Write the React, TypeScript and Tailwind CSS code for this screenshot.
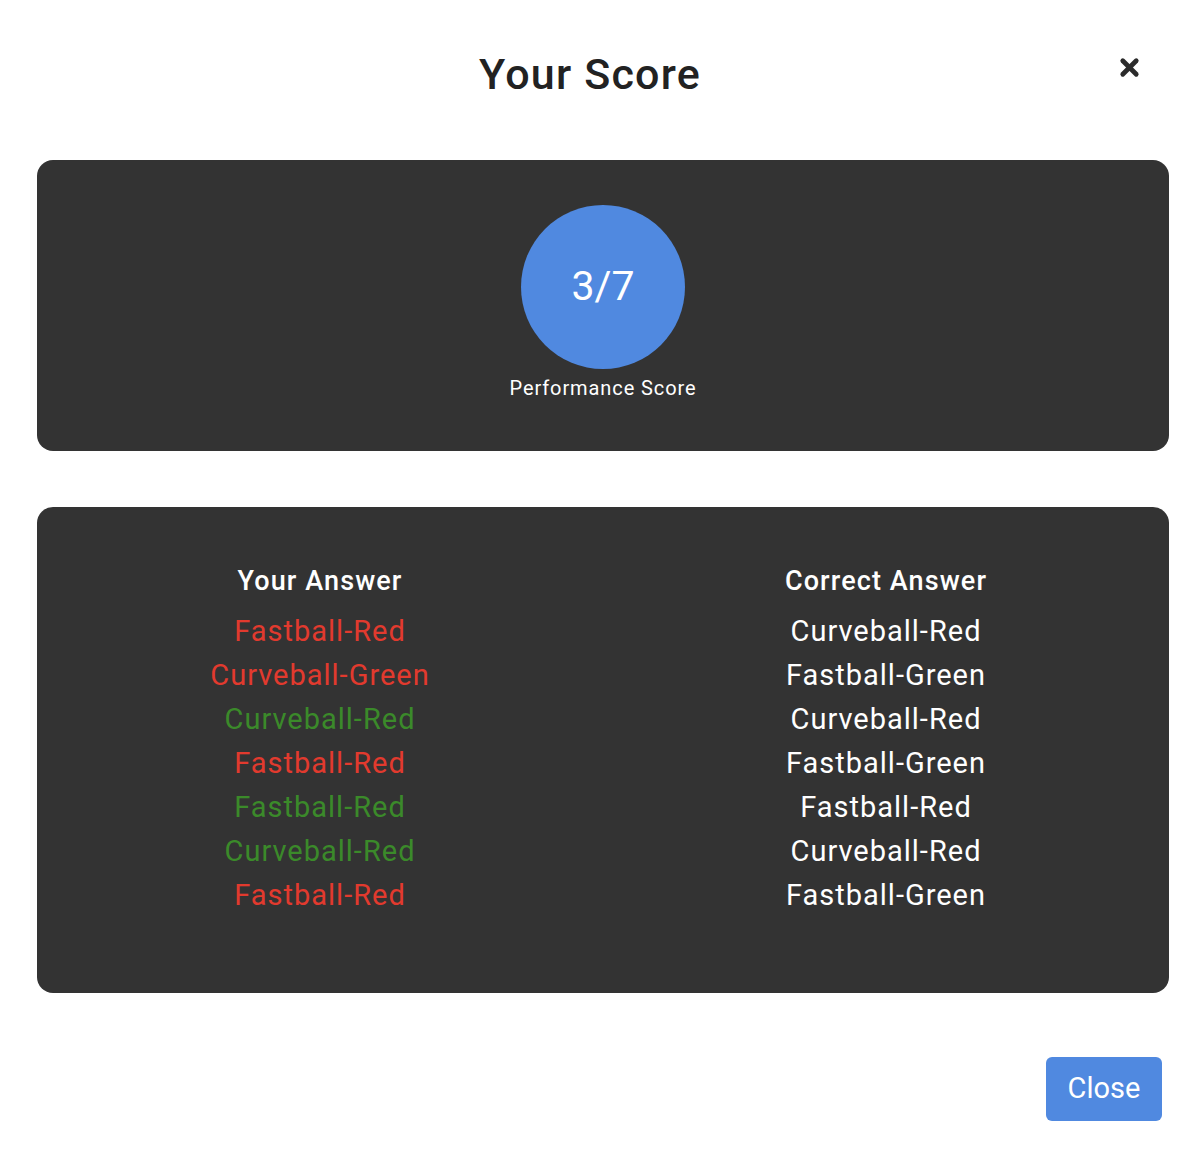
import {X} from "lucide-react";

const rows = [
    {mine: "Fastball-Red", ok: false, correct: "Curveball-Red"},
    {mine: "Curveball-Green", ok: false, correct: "Fastball-Green"},
    {mine: "Curveball-Red", ok: true, correct: "Curveball-Red"},
    {mine: "Fastball-Red", ok: false, correct: "Fastball-Green"},
    {mine: "Fastball-Red", ok: true, correct: "Fastball-Red"},
    {mine: "Curveball-Red", ok: true, correct: "Curveball-Red"},
    {mine: "Fastball-Red", ok: false, correct: "Fastball-Green"},
];

export default function App() {
    return (
        <div className="min-h-[1173px] w-[1200px] bg-white font-['Roboto','Liberation_Sans',sans-serif]">
            <div className="relative h-[160px]">
                <h2 className="flex justify-center pt-[48px] pr-[20px] text-[43px] leading-[52px] font-medium tracking-[1.2px] text-[#222222]">
                    Your Score
                </h2>
                <button className="absolute left-[1116px] top-[54px] text-[#2b2b2b]">
                    <X size={27} strokeWidth={4.2}/>
                </button>
            </div>

            <div className="ml-[37px] flex h-[291px] w-[1132px] flex-col items-center rounded-[16px] bg-[#333333] pt-[45px]">
                <div className="flex h-[164px] w-[164px] items-center justify-center rounded-full bg-[#5089e0] text-[41px] text-white">
                    3/7
                </div>
                <p className="mt-[7px] text-[20px] leading-[24px] tracking-[0.9px] text-white">Performance Score</p>
            </div>

            <div className="ml-[37px] mt-[56px] grid h-[486px] w-[1132px] grid-cols-2 rounded-[16px] bg-[#333333] pt-[58px] text-center">
                <div>
                    <h3 className="text-[27px] leading-[32px] font-medium tracking-[1.1px] text-white">Your Answer</h3>
                    <div className="mt-[12px]">
                        {rows.map((r, i) => (
                            <div
                                key={i}
                                className={`text-[29px] leading-[44px] tracking-[1px] ${r.ok ? "text-[#3b8a2a]" : "text-[#e23a2e]"}`}
                            >
                                {r.mine}
                            </div>
                        ))}
                    </div>
                </div>
                <div>
                    <h3 className="text-[27px] leading-[32px] font-medium tracking-[1.1px] text-white">Correct Answer</h3>
                    <div className="mt-[12px]">
                        {rows.map((r, i) => (
                            <div key={i} className="text-[29px] leading-[44px] tracking-[1px] text-white">
                                {r.correct}
                            </div>
                        ))}
                    </div>
                </div>
            </div>

            <div className="flex justify-end pr-[38px] pt-[64px]">
                <button className="h-[64px] w-[116px] rounded-[6px] bg-[#5089e0] text-[29px] text-white">
                    Close
                </button>
            </div>
        </div>
    );
}
